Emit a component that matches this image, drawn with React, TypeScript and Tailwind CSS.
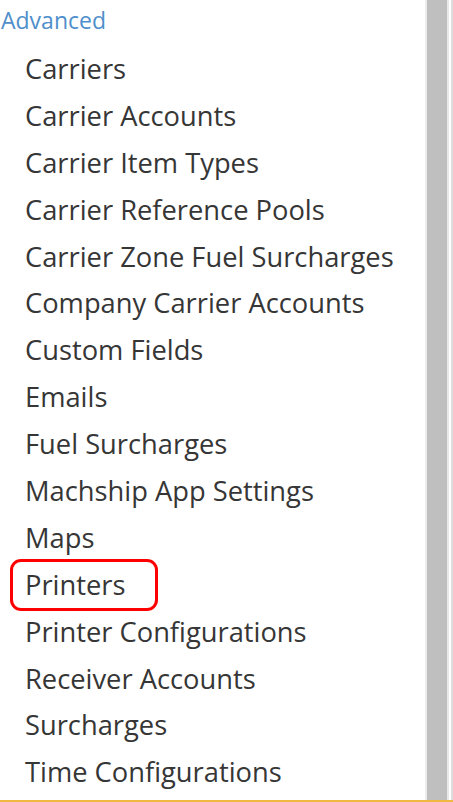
import React from 'react';

const items = [
  'Carriers',
  'Carrier Accounts',
  'Carrier Item Types',
  'Carrier Reference Pools',
  'Carrier Zone Fuel Surcharges',
  'Company Carrier Accounts',
  'Custom Fields',
  'Emails',
  'Fuel Surcharges',
  'Machship App Settings',
  'Maps',
  'Printers',
  'Printer Configurations',
  'Receiver Accounts',
  'Surcharges',
  'Time Configurations',
];

const App: React.FC = () => {
  return (
    <div className="w-[453px] h-[802px] bg-white flex flex-col overflow-hidden" style={{ fontFamily: '"Open Sans", sans-serif' }}>
      <div className="flex flex-1 min-h-0">
        {/* Menu */}
        <div className="flex-1 min-w-0">
          <div className="pt-[5px] pl-[1px] text-[23px] leading-[30px] text-[#4f8fcb]">Advanced</div>
          <ul className="mt-[11px]">
            {items.map((item) => (
              <li key={item} className="h-[46.9px] flex items-center pl-[25px]">
                {item === 'Printers' ? (
                  <span className="-ml-[15px] pl-[12px] pr-[30px] h-[52px] flex items-center border-[3px] border-[#ff0000] rounded-[11px] text-[27.3px] text-[#363636]">
                    {item}
                  </span>
                ) : (
                  <span className="text-[27.3px] text-[#363636] whitespace-nowrap">{item}</span>
                )}
              </li>
            ))}
          </ul>
        </div>

        {/* Scrollbar */}
        <div className="w-[28px] flex shrink-0">
          <div className="w-[2px] bg-[#ececec]" />
          <div className="w-[20px] bg-[#bfbfbf]" />
          <div className="w-[2px] bg-[#e8e8e8]" />
          <div className="w-[2px] bg-white" />
          <div className="w-[2px] bg-[#dcdcdc]" />
        </div>
      </div>
      <div className="h-[2px] bg-[#f0b840] shrink-0" />
    </div>
  );
};

export default App;
